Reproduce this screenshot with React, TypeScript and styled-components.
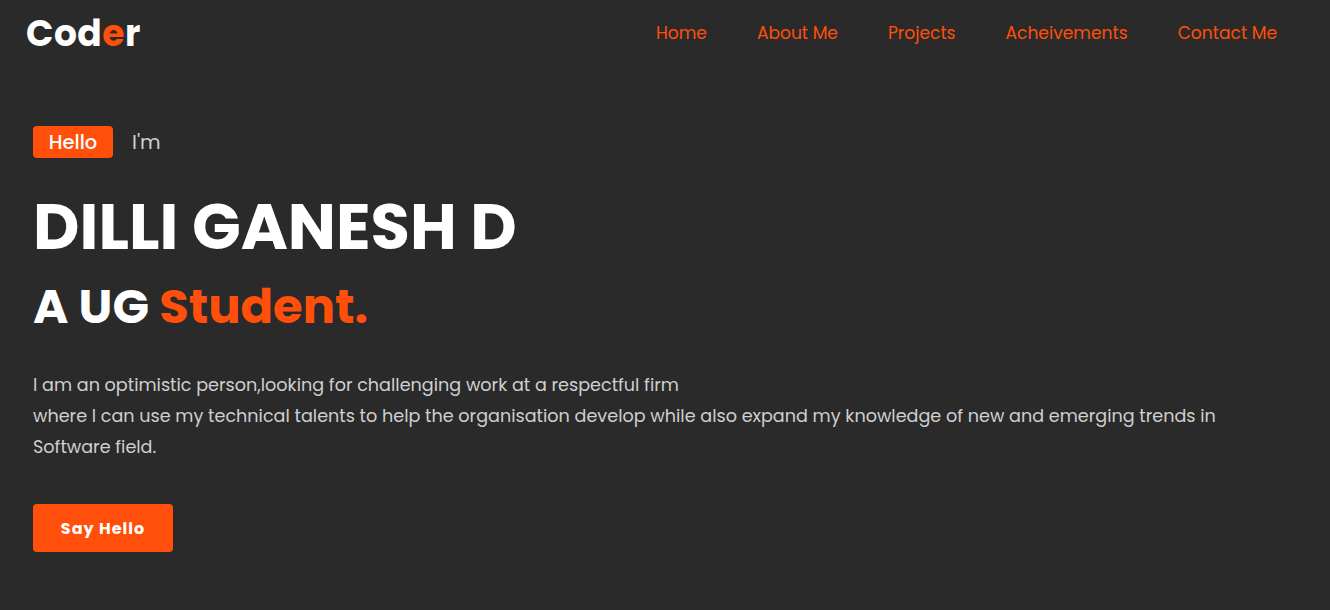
import React, {FC} from 'react';
import styled, {createGlobalStyle} from "styled-components";

const ORANGE = '#ff4f0a'

const GlobalStyle = createGlobalStyle`
  body {
    margin: 0;
    background-color: #2a2a2a;
    font-family: Poppins, Inter, "Open Sans", sans-serif;
  }
`

const navItems = ['Home', 'About Me', 'Projects', 'Acheivements', 'Contact Me']

const App: FC = () => {
    return (
        <>
            <GlobalStyle/>
            <StyledHeader>
                <Logo>Cod<span>e</span>r</Logo>
                <StyledNav>
                    {navItems.map(item => <NavItem key={item} href={'#'}>{item}</NavItem>)}
                </StyledNav>
            </StyledHeader>

            <Hero>
                <GreetingRow>
                    <Badge>Hello</Badge>
                    <Im>I'm</Im>
                </GreetingRow>
                <Name>DILLI GANESH D</Name>
                <Role>A UG <span>Student.</span></Role>
                <About>
                    I am an optimistic person,looking for challenging work at a respectful firm<br/>
                    where I can use my technical talents to help the organisation develop while also expand my knowledge of new and emerging trends in<br/>
                    Software field.
                </About>
                <SayHello>Say Hello</SayHello>
            </Hero>
        </>
    );
};

export default App;

const StyledHeader = styled.header`
  display: flex;
  justify-content: space-between;
  align-items: center;
  height: 66px;
  padding: 0 53px 0 26px;
`

const Logo = styled.div`
  font-size: 36px;
  font-weight: 700;
  color: #fff;
  letter-spacing: 0.5px;

  & > span {
    color: ${ORANGE};
  }
`

const StyledNav = styled.nav`
  display: flex;
  gap: 50px;
`

const NavItem = styled.a`
  color: ${ORANGE};
  text-decoration: none;
  font-size: 17.1px;
`

const Hero = styled.section`
  padding: 60px 33px 0 33px;
`

const GreetingRow = styled.div`
  display: flex;
  align-items: center;
  gap: 19px;
`

const Badge = styled.span`
  background-color: ${ORANGE};
  color: #fff;
  font-size: 19.5px;
  font-weight: 500;
  height: 32px;
  line-height: 33px;
  width: 80px;
  text-align: center;
  border-radius: 4px;
`

const Im = styled.span`
  color: #cfcfcf;
  font-size: 20px;
`

const Name = styled.h1`
  margin: 31px 0 0 0;
  color: #fff;
  font-size: 64px;
  font-weight: 700;
  line-height: 1.2;
`

const Role = styled.h2`
  margin: 12px 0 0 0;
  color: #fff;
  font-size: 48px;
  font-weight: 700;
  line-height: 1.2;

  & > span {
    color: ${ORANGE};
  }
`

const About = styled.p`
  margin: 35px 0 0 0;
  color: #cfcfcf;
  font-size: 17.6px;
  line-height: 31px;
`

const SayHello = styled.button`
  margin-top: 41px;
  width: 140px;
  height: 48px;
  border: none;
  border-radius: 4px;
  background-color: ${ORANGE};
  color: #fff;
  font-family: inherit;
  font-size: 16px;
  font-weight: 700;
  letter-spacing: 1px;
  cursor: pointer;
`
